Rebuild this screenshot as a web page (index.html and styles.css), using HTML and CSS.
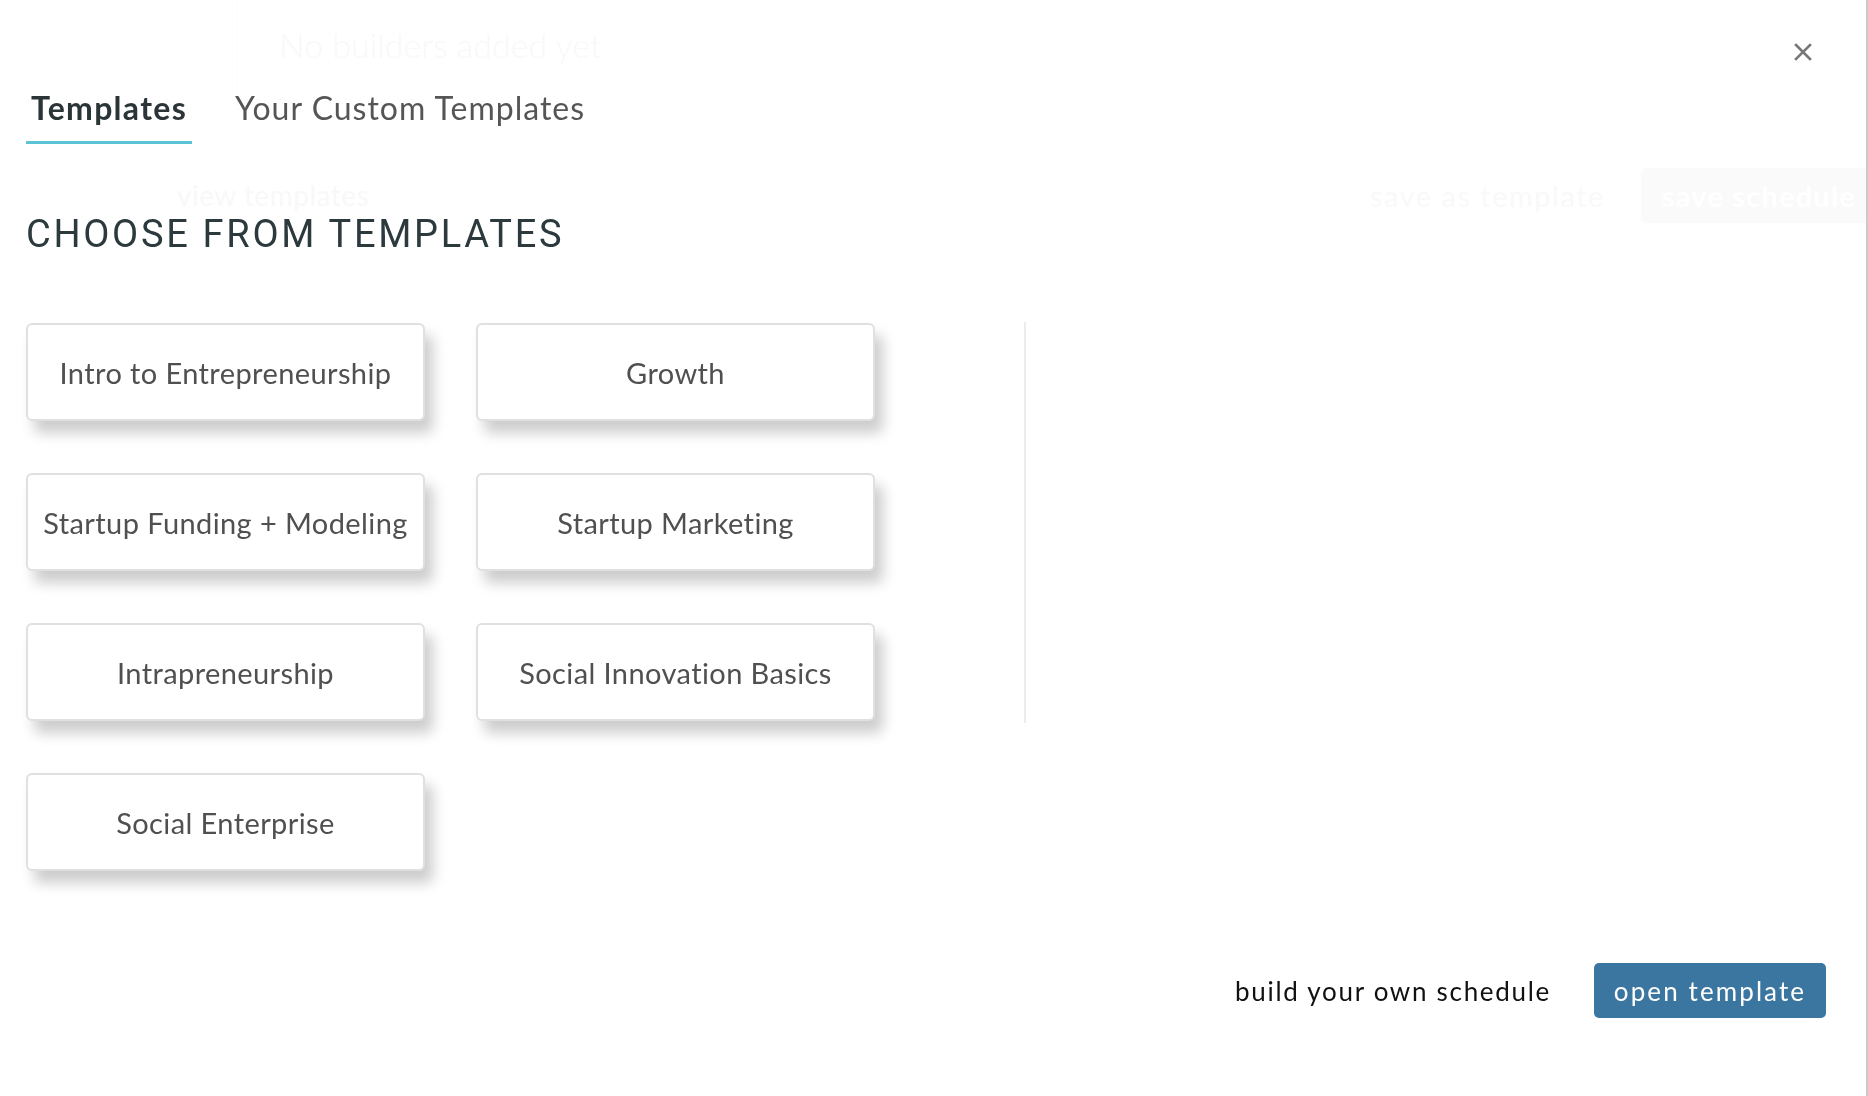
FILE: index.html
```html
<!DOCTYPE html>
<html lang="en">
<head>
  <meta charset="UTF-8">
  <meta name="viewport" content="width=device-width, initial-scale=1.0">
  <title>Choose a Template</title>
  <link rel="stylesheet" href="styles.css">
</head>
<body>
  <!-- schedule builder page, showing faintly behind the modal -->
  <div class="page" aria-hidden="true">
    <div class="page-top">
      <p class="empty-note">No builders added yet</p>
    </div>
    <div class="page-bar">
      <a class="page-link">view templates</a>
      <div class="page-actions">
        <span class="page-save-as">save as template</span>
        <span class="page-save">save schedule</span>
      </div>
    </div>
  </div>

  <div class="modal">
    <button class="close" aria-label="Close">
      <svg width="18" height="18" viewBox="0 0 18 18">
        <path d="M2 2 L16 16 M16 2 L2 16" stroke="#777" stroke-width="2.6" stroke-linecap="square" fill="none"/>
      </svg>
    </button>

    <nav class="tabs">
      <span class="tab active">Templates</span>
      <span class="tab">Your Custom Templates</span>
    </nav>

    <h2 class="section-title">CHOOSE FROM TEMPLATES</h2>

    <div class="picker">
      <div class="template-grid" id="templateGrid"></div>
      <div class="preview"></div>
    </div>

    <div class="footer">
      <button class="link-btn">build your own schedule</button>
      <button class="primary-btn">open template</button>
    </div>
  </div>

  <script>
    const templates = [
      'Intro to Entrepreneurship',
      'Growth',
      'Startup Funding + Modeling',
      'Startup Marketing',
      'Intrapreneurship',
      'Social Innovation Basics',
      'Social Enterprise'
    ];

    // Render template cards
    const grid = document.getElementById('templateGrid');
    templates.forEach((name) => {
      const card = document.createElement('button');
      card.className = 'template-card';
      card.textContent = name;
      grid.appendChild(card);
    });
  </script>
</body>
</html>
```

FILE: styles.css
```css
body {
  margin: 0;
  padding: 0;
  font-family: 'Lato', 'Open Sans', sans-serif;
  background-color: #ffffff;
  height: 100vh;
  overflow: hidden;
}

/* background page */
.page {
  opacity: 0.03;
  width: 1868px;
}

.page-top {
  margin-left: 237px;
  width: 1577px;
  height: 110px;
  border-left: 1px solid #bbb;
  border-bottom: 1px solid #ddd;
  border-right: 1px solid #ddd;
  box-sizing: border-box;
}

.empty-note {
  margin: 0;
  padding: 23px 0 0 41px;
  font-size: 34px;
  font-weight: 300;
  color: #444;
  line-height: 44px;
}

.page-bar {
  display: flex;
  justify-content: space-between;
  align-items: center;
  margin-top: 58px;
  padding-left: 177px;
}

.page-link {
  font-size: 28px;
  line-height: 28px;
  letter-spacing: 0.5px;
  color: #444;
  margin-top: -2px;
}

.page-actions {
  display: flex;
  align-items: center;
  gap: 36px;
}

.page-save-as {
  font-size: 29px;
  line-height: 30px;
  letter-spacing: 1.5px;
  color: #555;
}

.page-save {
  background-color: #777;
  color: #fff;
  font-size: 29px;
  line-height: 35px;
  font-weight: 700;
  letter-spacing: 1.2px;
  padding: 10px 12px 10px 21px;
  border-radius: 6px 0 0 6px;
}

/* modal */
.modal {
  position: fixed;
  top: 0;
  left: 0;
  right: 0;
  bottom: 0;
  box-sizing: border-box;
  padding: 90px 40px 0 26px;
  border-right: 2px solid #cacaca;
}

.close {
  position: absolute;
  top: 43px;
  right: 54px;
  background: none;
  border: none;
  padding: 0;
  width: 18px;
  height: 18px;
  cursor: pointer;
}

.close svg {
  display: block;
}

.tabs {
  display: flex;
  gap: 38px;
}

.tab {
  font-size: 32px;
  line-height: 36px;
  letter-spacing: 1px;
  padding: 0 5px 15px;
  color: #555;
  border-bottom: 3px solid transparent;
  cursor: pointer;
}

.tab.active {
  font-weight: 700;
  letter-spacing: 1.3px;
  color: #2b3538;
  border-bottom-color: #5bc3d6;
}

.section-title {
  margin: 71px 0 0;
  font-family: 'Roboto', sans-serif;
  font-weight: 400;
  font-size: 38px;
  line-height: 38px;
  letter-spacing: 2.7px;
  color: #2c3a3d;
}

.picker {
  display: flex;
  align-items: flex-start;
  gap: 149px;
  margin-top: 70px;
}

.template-grid {
  display: grid;
  grid-template-columns: 399px 399px;
  grid-auto-rows: 98px;
  column-gap: 51px;
  row-gap: 52px;
}

.template-card {
  background: #ffffff;
  border: 2px solid #e0e0e0;
  border-radius: 6px;
  box-shadow: 8px 12px 14px rgba(0, 0, 0, 0.2);
  font-family: 'Lato', sans-serif;
  font-size: 29px;
  letter-spacing: 0.4px;
  color: #505050;
  cursor: pointer;
  padding: 0;
}

.preview {
  width: 500px;
  height: 401px;
  margin-top: -1px;
  border-left: 2px solid #ececf0;
}

.footer {
  display: flex;
  justify-content: flex-end;
  align-items: center;
  gap: 43px;
  margin-top: 92px;
}

.link-btn {
  background: none;
  border: none;
  padding: 0;
  font-family: 'Lato', sans-serif;
  font-size: 26px;
  letter-spacing: 1.7px;
  color: #111;
  cursor: pointer;
}

.primary-btn {
  background-color: #3b76a1;
  border: none;
  border-radius: 5px;
  width: 232px;
  height: 55px;
  font-family: 'Lato', sans-serif;
  font-size: 26px;
  letter-spacing: 2.1px;
  color: #ffffff;
  cursor: pointer;
}
```
